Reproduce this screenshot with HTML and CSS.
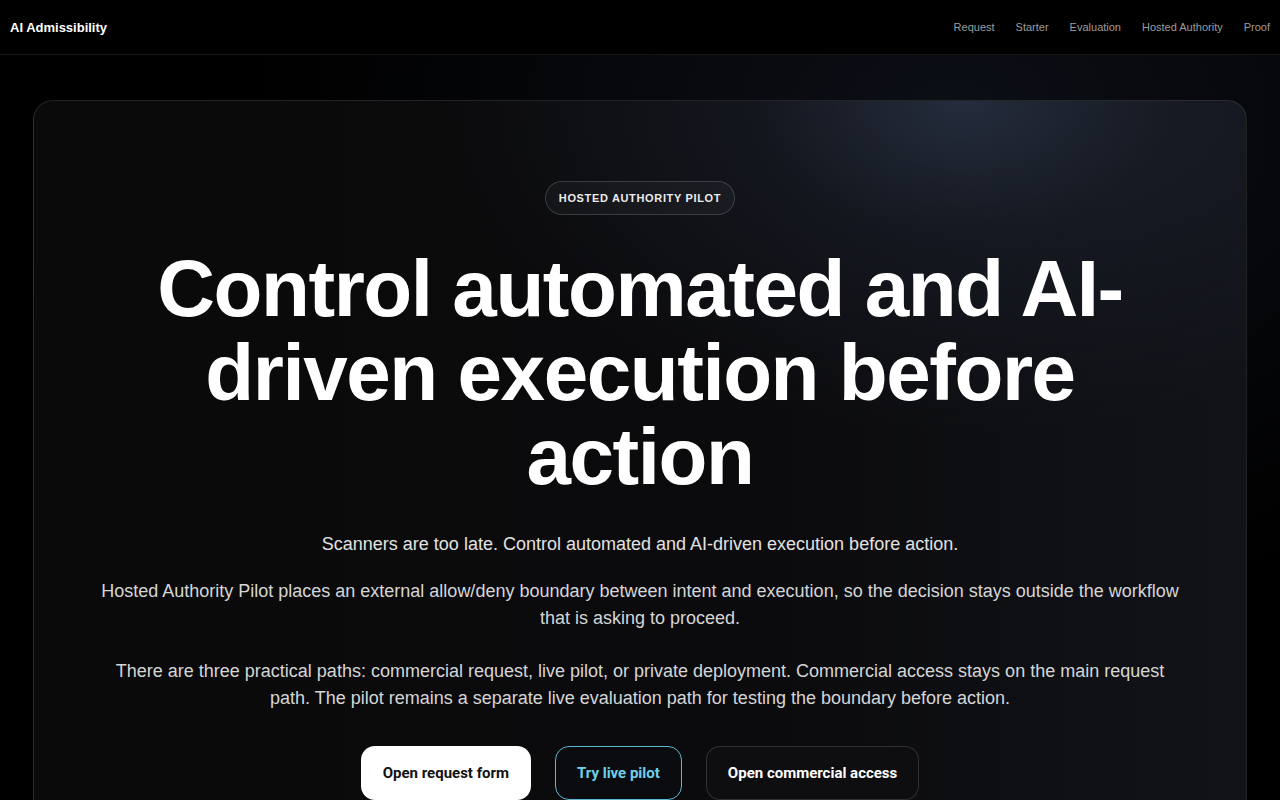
FILE: index.html
```html
<!DOCTYPE html>
<html lang="en">
<head>
<meta charset="utf-8">
<title>AI Admissibility</title>
<link rel="stylesheet" href="styles.css">
</head>
<body>
<header class="topbar">
  <a class="brand" href="#">AI Admissibility</a>
  <nav class="nav">
    <a href="#">Request</a>
    <a href="#">Starter</a>
    <a href="#">Evaluation</a>
    <a href="#">Hosted Authority</a>
    <a href="#">Proof</a>
  </nav>
</header>
<main class="page">
  <section class="hero">
    <span class="badge">HOSTED AUTHORITY PILOT</span>
    <h1 class="title">Control automated and AI-driven execution before action</h1>
    <p class="lead">Scanners are too late. Control automated and AI-driven execution before action.</p>
    <p class="copy copy-a">Hosted Authority Pilot places an external allow/deny boundary between intent and execution, so the decision stays outside the workflow that is asking to proceed.</p>
    <p class="copy copy-b">There are three practical paths: commercial request, live pilot, or private deployment. Commercial access stays on the main request path. The pilot remains a separate live evaluation path for testing the boundary before action.</p>
    <div class="actions">
      <a class="btn btn-primary" href="#">Open request form</a>
      <a class="btn btn-accent" href="#">Try live pilot</a>
      <a class="btn btn-dark" href="#">Open commercial access</a>
    </div>
  </section>
</main>
</body>
</html>
```
FILE: styles.css
```css
* { box-sizing: border-box; }
html, body { margin: 0; padding: 0; }
body {
  background: radial-gradient(ellipse 700px 500px at 950px 120px, #0c0f16 0%, #000 100%), #000;
  background-color: #000;
  color: #fff;
  font-family: "Liberation Sans", Arial, sans-serif;
  min-height: 800px;
  overflow: hidden;
}
a { text-decoration: none; color: inherit; }

.topbar {
  height: 55px;
  display: flex;
  align-items: center;
  justify-content: space-between;
  padding: 0 10px;
  border-bottom: 1px solid rgba(255,255,255,0.09);
  background: #000;
}
.brand {
  font-size: 13px;
  font-weight: 700;
  color: #fff;
}
.nav {
  display: flex;
  gap: 21px;
}
.nav a {
  font-size: 11px;
  color: #9c9c9c;
}

.page {
  padding: 45px 33px 0;
}
.hero {
  border: 1px solid rgba(255,255,255,0.1);
  border-radius: 20px;
  background:
    radial-gradient(ellipse 520px 330px at 930px 0px, rgba(44,54,74,0.75) 0%, rgba(30,36,50,0.45) 40%, rgba(11,11,13,0) 100%),
    linear-gradient(90deg, #0a0a0b 0%, #0b0b0d 60%, #111318 100%);
  padding: 80px 56px 60px;
  display: flex;
  flex-direction: column;
  align-items: center;
  text-align: center;
  min-height: 760px;
}
.badge {
  display: inline-block;
  font-size: 11px;
  font-weight: 700;
  letter-spacing: 0.06em;
  color: #ececec;
  padding: 10px 13px;
  line-height: 12px;
  border: 1px solid rgba(255,255,255,0.16);
  border-radius: 999px;
  background: rgba(255,255,255,0.035);
}
.title {
  margin: 32px 0 0;
  max-width: 1000px;
  font-size: 80px;
  line-height: 1.05;
  font-weight: 700;
  letter-spacing: -0.018em;
  color: #fff;
}
.lead {
  margin: 32px 0 0;
  font-size: 18px;
  line-height: 27px;
  color: #e2e2e2;
}
.copy {
  max-width: 1090px;
  font-size: 18px;
  line-height: 27px;
  color: #d6d6d6;
}
.copy-a { margin: 20px 0 0; }
.copy-b { margin: 26px 0 0; }

.actions {
  margin-top: 34px;
  display: flex;
  gap: 24px;
}
.btn {
  display: inline-block;
  font-family: Roboto, "Liberation Sans", sans-serif;
  font-size: 15px;
  font-weight: 700;
  line-height: 16px;
  padding: 18px 21px;
  border-radius: 14px;
  border: 1px solid transparent;
}
.btn-primary {
  background: #fff;
  color: #111;
}
.btn-accent {
  background: #0b0c0f;
  color: #6fd0ea;
  border-color: #5cb9d3;
}
.btn-dark {
  background: #0e0e10;
  color: #fff;
  border-color: rgba(255,255,255,0.14);
}
```
